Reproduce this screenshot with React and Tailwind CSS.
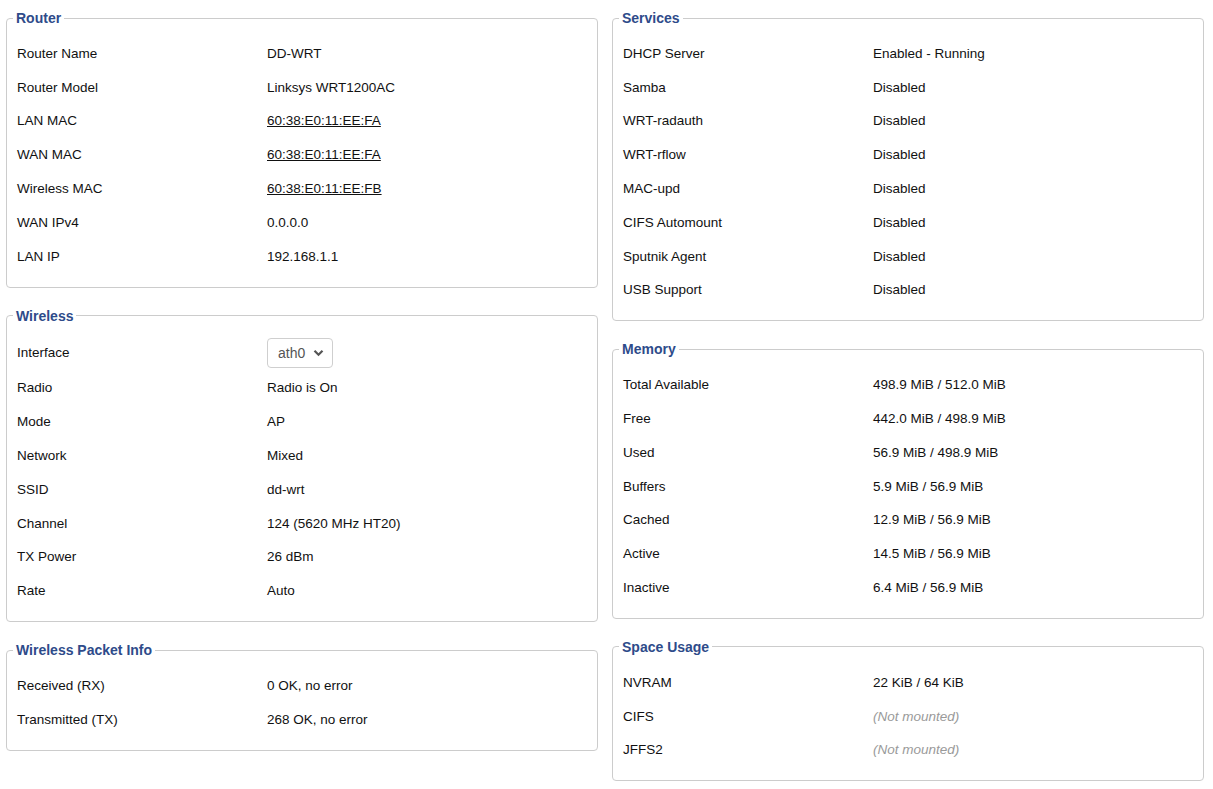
import React from "react";

const font = { fontFamily: '"Liberation Sans", Arial, sans-serif' };

function Row({ label, children, tall }) {
  return (
    <div className={`flex items-center ${tall ? "h-[37px]" : "h-[33.8px]"}`}>
      <div className="w-[250px] shrink-0">{label}</div>
      <div>{children}</div>
    </div>
  );
}

function Box({ title, children }) {
  return (
    <fieldset className="border border-[#cccccc] rounded-[4px] pl-[10px] pr-[10px] pt-[11px] pb-[13px] mb-[20px]">
      <legend className="px-[3px] ml-[-4px] text-[14px] font-bold text-[#2e4b8a] leading-[16px]">
        {title}
      </legend>
      {children}
    </fieldset>
  );
}

const U = ({ children }) => <span className="underline">{children}</span>;
const NM = () => <span className="italic text-[#9a9a9a]">(Not mounted)</span>;

function Select() {
  return (
    <div className="flex items-center h-[30px] w-[66px] border border-[#cfcfcf] rounded-[4px] pl-[10px] text-[14px] text-[#555555]">
      <span>ath0</span>
      <svg className="ml-[8px]" width="11" height="8" viewBox="0 0 11 8">
        <path d="M1.5 1.8 L5.5 5.8 L9.5 1.8" fill="none" stroke="#555" strokeWidth="2.2" />
      </svg>
    </div>
  );
}

export default function App() {
  return (
    <div className="bg-white min-h-[789px] pt-[10px] px-[6px] text-[13.5px] text-[#111111] leading-[16px]" style={font}>
      <div className="flex gap-x-[14px]">
        <div className="w-[592px]">
          <Box title="Router">
            <Row label="Router Name">DD-WRT</Row>
            <Row label="Router Model">Linksys WRT1200AC</Row>
            <Row label="LAN MAC"><U>60:38:E0:11:EE:FA</U></Row>
            <Row label="WAN MAC"><U>60:38:E0:11:EE:FA</U></Row>
            <Row label="Wireless MAC"><U>60:38:E0:11:EE:FB</U></Row>
            <Row label="WAN IPv4">0.0.0.0</Row>
            <Row label="LAN IP">192.168.1.1</Row>
          </Box>
          <Box title="Wireless">
            <Row label="Interface" tall><Select /></Row>
            <Row label="Radio">Radio is On</Row>
            <Row label="Mode">AP</Row>
            <Row label="Network">Mixed</Row>
            <Row label="SSID">dd-wrt</Row>
            <Row label="Channel">124 (5620 MHz HT20)</Row>
            <Row label="TX Power">26 dBm</Row>
            <Row label="Rate">Auto</Row>
          </Box>
          <Box title="Wireless Packet Info">
            <Row label="Received (RX)">0 OK, no error</Row>
            <Row label="Transmitted (TX)">268 OK, no error</Row>
          </Box>
        </div>
        <div className="w-[592px]">
          <Box title="Services">
            <Row label="DHCP Server">Enabled - Running</Row>
            <Row label="Samba">Disabled</Row>
            <Row label="WRT-radauth">Disabled</Row>
            <Row label="WRT-rflow">Disabled</Row>
            <Row label="MAC-upd">Disabled</Row>
            <Row label="CIFS Automount">Disabled</Row>
            <Row label="Sputnik Agent">Disabled</Row>
            <Row label="USB Support">Disabled</Row>
          </Box>
          <Box title="Memory">
            <Row label="Total Available">498.9 MiB / 512.0 MiB</Row>
            <Row label="Free">442.0 MiB / 498.9 MiB</Row>
            <Row label="Used">56.9 MiB / 498.9 MiB</Row>
            <Row label="Buffers">5.9 MiB / 56.9 MiB</Row>
            <Row label="Cached">12.9 MiB / 56.9 MiB</Row>
            <Row label="Active">14.5 MiB / 56.9 MiB</Row>
            <Row label="Inactive">6.4 MiB / 56.9 MiB</Row>
          </Box>
          <Box title="Space Usage">
            <Row label="NVRAM">22 KiB / 64 KiB</Row>
            <Row label="CIFS"><NM /></Row>
            <Row label="JFFS2"><NM /></Row>
          </Box>
        </div>
      </div>
    </div>
  );
}
